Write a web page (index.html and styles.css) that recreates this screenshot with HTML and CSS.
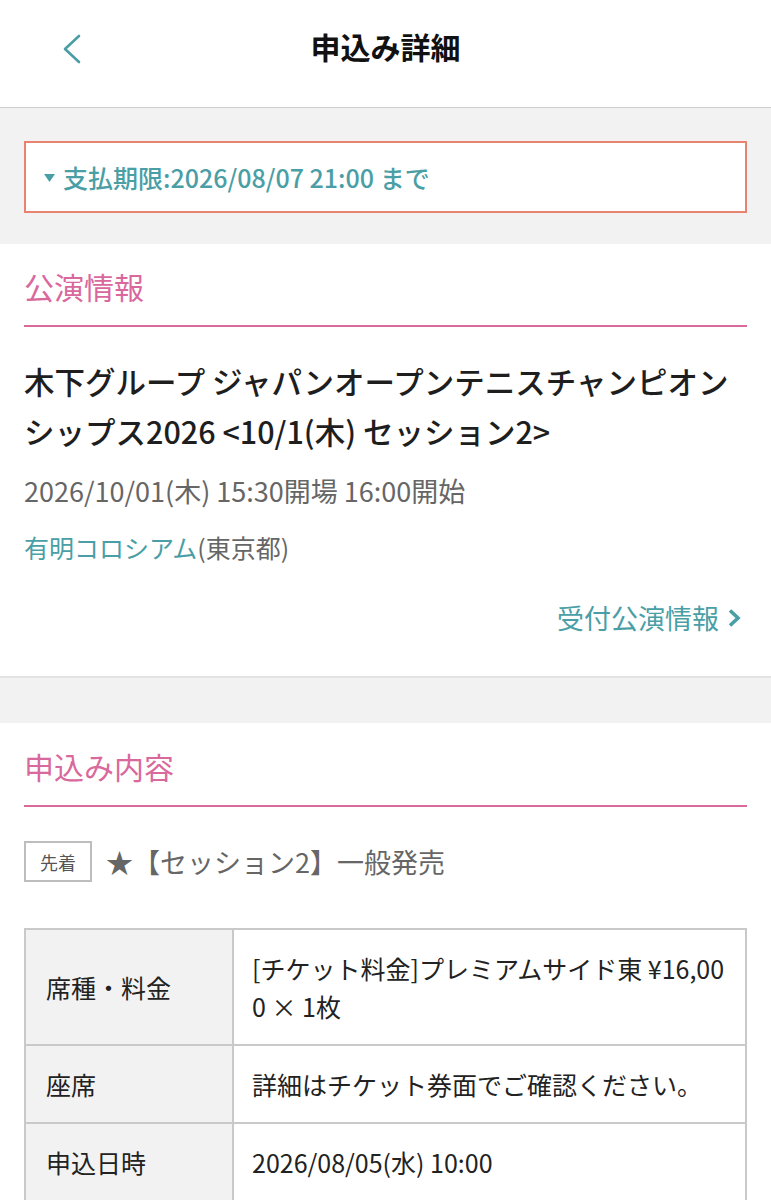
FILE: index.html
```html
<!DOCTYPE html>
<html lang="ja">
<head>
<meta charset="utf-8">
<title>申込み詳細</title>
<link rel="stylesheet" href="styles.css">
</head>
<body>
<header class="topbar">
  <span class="back">
    <svg width="20" height="30" viewBox="0 0 20 30"><polyline points="17,2 3,15 17,28" fill="none" stroke="#4a9ea5" stroke-width="2.6" stroke-linecap="round" stroke-linejoin="round"/></svg>
  </span>
  <h1 class="title">申込み詳細</h1>
</header>

<div class="band">
  <div class="deadline">
    <svg class="tri" width="11" height="8" viewBox="0 0 11 8"><polygon points="0,0 11,0 5.5,8" fill="#4a9ea5"/></svg>
    <span>支払期限:2026/08/07 21:00 まで</span>
  </div>
</div>

<section class="card first">
  <h2 class="sec-head">公演情報</h2>
  <p class="event-name">木下グループ ジャパンオープンテニスチャンピオンシップス2026 &lt;10/1(木) セッション2&gt;</p>
  <p class="event-date">2026/10/01(木) 15:30開場 16:00開始</p>
  <p class="event-venue"><span class="venue-link">有明コロシアム</span>(東京都)</p>
  <div class="more">
    <span>受付公演情報</span>
    <svg width="14" height="20" viewBox="0 0 14 20"><polyline points="3,2.5 11,10 3,17.5" fill="none" stroke="#4a9ea5" stroke-width="3.6" stroke-linejoin="miter"/></svg>
  </div>
</section>

<div class="gap"></div>

<section class="card">
  <h2 class="sec-head">申込み内容</h2>
  <div class="sale">
    <span class="badge">先着</span>
    <span class="sale-name">★【セッション2】一般発売</span>
  </div>
  <table class="detail">
    <tr><th>席種・料金</th><td>[チケット料金]プレミアムサイド東 ¥16,000 × 1枚</td></tr>
    <tr><th>座席</th><td>詳細はチケット券面でご確認ください。</td></tr>
    <tr><th>申込日時</th><td>2026/08/05(水) 10:00</td></tr>
  </table>
</section>
</body>
</html>
```

FILE: styles.css
```css
* { box-sizing: border-box; }
html, body { margin: 0; padding: 0; }
body {
  font-family: "Noto Sans CJK JP", "Noto Sans", sans-serif;
  background: #f2f2f2;
  color: #222;
  width: 771px;
}
p, h1, h2 { margin: 0; }

.topbar {
  height: 108px;
  background: #fff;
  border-bottom: 1px solid #cfcfcf;
  display: flex;
  align-items: center;
  justify-content: center;
  position: relative;
}
.back {
  position: absolute;
  left: 62px;
  top: 34px;
  display: flex;
}
.title {
  font-size: 30px;
  font-weight: 700;
  line-height: 40px;
  margin-top: -16px;
  color: #111;
}

.band {
  padding: 33px 24px 31px;
}
.deadline {
  height: 72px;
  background: #fff;
  border: 2px solid #e8836f;
  display: flex;
  align-items: center;
  padding-left: 18px;
  gap: 8px;
  color: #4a9ea5;
  font-size: 25px;
  font-weight: 500;
}
.deadline .tri { margin-top: 2px; }

.card {
  background: #fff;
  padding: 20px 24px 38px;
}
.card.first { border-bottom: 2px solid #e3e3e3; }
.gap { height: 45px; }

.sec-head {
  font-size: 30px;
  font-weight: 400;
  color: #d9689c;
  line-height: 45px;
  padding-bottom: 16px;
  border-bottom: 2px solid #d9689c;
}
.gap + .card .sec-head { margin-top: 1px; }

.event-name {
  margin-top: 29px;
  font-size: 30.5px;
  font-weight: 500;
  line-height: 50px;
  color: #1e1e1e;
}
.event-date {
  margin-top: 15px;
  font-size: 27px;
  line-height: 40px;
  color: #666;
}
.event-venue {
  margin-top: 16px;
  font-size: 25px;
  line-height: 40px;
  color: #666;
}
.venue-link { color: #4a9ea5; }

.more {
  margin-top: 31px;
  display: flex;
  justify-content: flex-end;
  align-items: center;
  gap: 8px;
  padding-right: 6px;
  font-size: 27px;
  line-height: 40px;
  color: #4a9ea5;
}

.sale {
  margin-top: 34px;
  display: flex;
  align-items: center;
  gap: 14px;
}
.badge {
  width: 68px;
  height: 41px;
  border: 2px solid #bdbdbd;
  display: flex;
  align-items: center;
  justify-content: center;
  font-size: 18px;
  color: #555;
}
.sale-name {
  font-size: 27px;
  color: #666;
}

.detail {
  margin-top: 46px;
  width: 100%;
  border-collapse: collapse;
  font-size: 25px;
}
.detail th, .detail td {
  border: 2px solid #c9c9c9;
  padding: 19px 18px 19px 20px;
  line-height: 38px;
  text-align: left;
  vertical-align: middle;
  font-weight: 400;
  color: #222;
}
.detail th {
  width: 208px;
  background: #f2f2f2;
}
.detail td {
  word-break: break-all;
  padding-left: 18px;
}
```
